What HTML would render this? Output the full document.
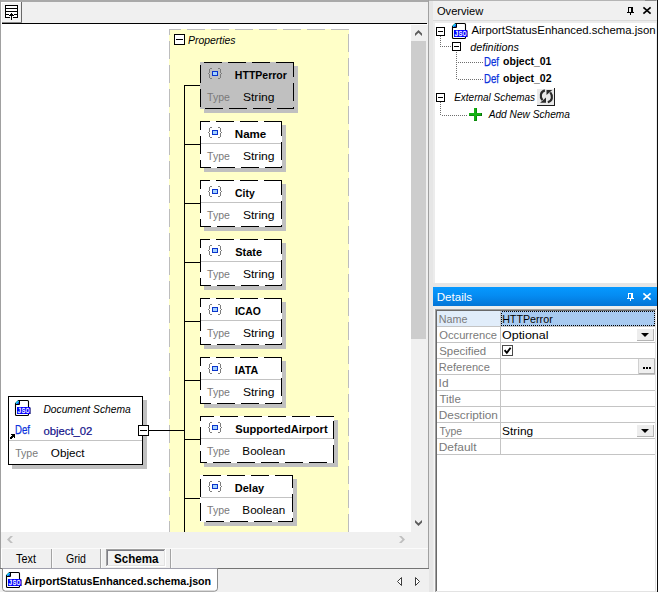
<!DOCTYPE html>
<html lang="en">
<head>
<meta charset="utf-8">
<title>AirportStatusEnhanced.schema.json - JSON Schema View</title>
<style>
html,body{margin:0;padding:0;width:658px;height:592px;overflow:hidden;background:#f0f0f0;}
svg{position:absolute;left:0;top:0;display:block;}
svg text{font-family:"Liberation Sans",sans-serif;white-space:pre;}
</style>
</head>
<body>
<svg width="658" height="592" viewBox="0 0 658 592">
<g id="shapes">
<rect x="0" y="0" width="428" height="2" fill="#a9a9a9" />
<rect x="428" y="0" width="230" height="1" fill="#b4b4b4" />
<rect x="645" y="0" width="11" height="1" fill="#8c8c8c" />
<rect x="0" y="0" width="1" height="568" fill="#a0a0a0" />
<rect x="1" y="2" width="1" height="566" fill="#fff" />
<rect x="1" y="2" width="20" height="1" fill="#fff" />
<rect x="3" y="3" width="17" height="19" fill="#f4f4f4" />
<rect x="21" y="2" width="1" height="21" fill="#696969" />
<rect x="2" y="22" width="20" height="1" fill="#8a8a8a" />
<rect x="2" y="23" width="425" height="1" fill="#000" />
<rect x="6" y="6" width="11" height="11" fill="#fff" />
<rect x="5" y="5" width="13" height="1" fill="#000" />
<rect x="5" y="8" width="13" height="1" fill="#000" />
<rect x="5" y="11" width="13" height="1" fill="#000" />
<rect x="5" y="14" width="4" height="1" fill="#000" />
<rect x="14" y="14" width="4" height="1" fill="#000" />
<rect x="5" y="17" width="5" height="1" fill="#000" />
<rect x="13" y="17" width="5" height="1" fill="#000" />
<rect x="5" y="5" width="1" height="13" fill="#000" />
<rect x="17" y="5" width="1" height="13" fill="#000" />
<rect x="11" y="13" width="1" height="7" fill="#000" />
<rect x="10" y="14" width="3" height="1" fill="#000" />
<rect x="9" y="15" width="5" height="1" fill="#000" />
<rect x="2" y="24" width="409" height="508" fill="#fff" />
<rect x="169" y="29" width="180" height="503" fill="#ffffc8" />
<g stroke="#bdbdbd" stroke-width="1" fill="none" shape-rendering="crispEdges" stroke-dasharray="18 6"><path d="M349 29.5H169"/><path d="M169.5 29V532" stroke-dashoffset="12"/><path d="M348.5 34V532"/></g>
<rect x="174" y="34" width="11" height="11" fill="#fff" />
<rect x="174" y="34" width="11" height="1" fill="#000" />
<rect x="174" y="44" width="11" height="1" fill="#000" />
<rect x="174" y="34" width="1" height="11" fill="#000" />
<rect x="184" y="34" width="1" height="11" fill="#000" />
<rect x="176" y="39" width="7" height="1" fill="#000" />
<rect x="184" y="85" width="1" height="447" fill="#000" />
<rect x="149" y="430" width="35" height="1" fill="#000" />
<rect x="204" y="66" width="94" height="47" fill="#c0c0c0" />
<rect x="200" y="62" width="94" height="47" fill="#c0c0c0" />
<path d="M294 62.5H200.5V108.5H293.5V62.5" fill="none" stroke="#000" stroke-width="1" stroke-dasharray="18 6" shape-rendering="crispEdges"/>
<rect x="185" y="85" width="15" height="1" fill="#000" />
<rect x="210" y="68" width="2" height="1" fill="#7c7c7c" />
<rect x="209" y="69" width="1" height="4" fill="#7c7c7c" />
<rect x="208" y="73" width="1" height="1" fill="#7c7c7c" />
<rect x="209" y="74" width="1" height="4" fill="#7c7c7c" />
<rect x="210" y="78" width="2" height="1" fill="#7c7c7c" />
<rect x="218" y="68" width="2" height="1" fill="#7c7c7c" />
<rect x="220" y="69" width="1" height="4" fill="#7c7c7c" />
<rect x="221" y="73" width="1" height="1" fill="#7c7c7c" />
<rect x="220" y="74" width="1" height="4" fill="#7c7c7c" />
<rect x="218" y="78" width="2" height="1" fill="#7c7c7c" />
<rect x="212" y="71" width="6" height="5" fill="#0a34cc" />
<rect x="213" y="72" width="4" height="3" fill="#a4d2ff" />
<rect x="204" y="125" width="82" height="47" fill="#c0c0c0" />
<rect x="200" y="121" width="82" height="47" fill="#fff" />
<rect x="201" y="143" width="80" height="1" fill="#c3c3c3" />
<path d="M282 121.5H200.5V167.5H281.5V121.5" fill="none" stroke="#000" stroke-width="1" stroke-dasharray="18 6" shape-rendering="crispEdges"/>
<rect x="185" y="144" width="15" height="1" fill="#000" />
<rect x="210" y="127" width="2" height="1" fill="#7c7c7c" />
<rect x="209" y="128" width="1" height="4" fill="#7c7c7c" />
<rect x="208" y="132" width="1" height="1" fill="#7c7c7c" />
<rect x="209" y="133" width="1" height="4" fill="#7c7c7c" />
<rect x="210" y="137" width="2" height="1" fill="#7c7c7c" />
<rect x="218" y="127" width="2" height="1" fill="#7c7c7c" />
<rect x="220" y="128" width="1" height="4" fill="#7c7c7c" />
<rect x="221" y="132" width="1" height="1" fill="#7c7c7c" />
<rect x="220" y="133" width="1" height="4" fill="#7c7c7c" />
<rect x="218" y="137" width="2" height="1" fill="#7c7c7c" />
<rect x="212" y="130" width="6" height="5" fill="#0a34cc" />
<rect x="213" y="131" width="4" height="3" fill="#a4d2ff" />
<rect x="204" y="184" width="82" height="47" fill="#c0c0c0" />
<rect x="200" y="180" width="82" height="47" fill="#fff" />
<rect x="201" y="202" width="80" height="1" fill="#c3c3c3" />
<path d="M282 180.5H200.5V226.5H281.5V180.5" fill="none" stroke="#000" stroke-width="1" stroke-dasharray="18 6" shape-rendering="crispEdges"/>
<rect x="185" y="203" width="15" height="1" fill="#000" />
<rect x="210" y="186" width="2" height="1" fill="#7c7c7c" />
<rect x="209" y="187" width="1" height="4" fill="#7c7c7c" />
<rect x="208" y="191" width="1" height="1" fill="#7c7c7c" />
<rect x="209" y="192" width="1" height="4" fill="#7c7c7c" />
<rect x="210" y="196" width="2" height="1" fill="#7c7c7c" />
<rect x="218" y="186" width="2" height="1" fill="#7c7c7c" />
<rect x="220" y="187" width="1" height="4" fill="#7c7c7c" />
<rect x="221" y="191" width="1" height="1" fill="#7c7c7c" />
<rect x="220" y="192" width="1" height="4" fill="#7c7c7c" />
<rect x="218" y="196" width="2" height="1" fill="#7c7c7c" />
<rect x="212" y="189" width="6" height="5" fill="#0a34cc" />
<rect x="213" y="190" width="4" height="3" fill="#a4d2ff" />
<rect x="204" y="243" width="82" height="47" fill="#c0c0c0" />
<rect x="200" y="239" width="82" height="47" fill="#fff" />
<rect x="201" y="261" width="80" height="1" fill="#c3c3c3" />
<path d="M282 239.5H200.5V285.5H281.5V239.5" fill="none" stroke="#000" stroke-width="1" stroke-dasharray="18 6" shape-rendering="crispEdges"/>
<rect x="185" y="262" width="15" height="1" fill="#000" />
<rect x="210" y="245" width="2" height="1" fill="#7c7c7c" />
<rect x="209" y="246" width="1" height="4" fill="#7c7c7c" />
<rect x="208" y="250" width="1" height="1" fill="#7c7c7c" />
<rect x="209" y="251" width="1" height="4" fill="#7c7c7c" />
<rect x="210" y="255" width="2" height="1" fill="#7c7c7c" />
<rect x="218" y="245" width="2" height="1" fill="#7c7c7c" />
<rect x="220" y="246" width="1" height="4" fill="#7c7c7c" />
<rect x="221" y="250" width="1" height="1" fill="#7c7c7c" />
<rect x="220" y="251" width="1" height="4" fill="#7c7c7c" />
<rect x="218" y="255" width="2" height="1" fill="#7c7c7c" />
<rect x="212" y="248" width="6" height="5" fill="#0a34cc" />
<rect x="213" y="249" width="4" height="3" fill="#a4d2ff" />
<rect x="204" y="302" width="82" height="47" fill="#c0c0c0" />
<rect x="200" y="298" width="82" height="47" fill="#fff" />
<rect x="201" y="320" width="80" height="1" fill="#c3c3c3" />
<path d="M282 298.5H200.5V344.5H281.5V298.5" fill="none" stroke="#000" stroke-width="1" stroke-dasharray="18 6" shape-rendering="crispEdges"/>
<rect x="185" y="321" width="15" height="1" fill="#000" />
<rect x="210" y="304" width="2" height="1" fill="#7c7c7c" />
<rect x="209" y="305" width="1" height="4" fill="#7c7c7c" />
<rect x="208" y="309" width="1" height="1" fill="#7c7c7c" />
<rect x="209" y="310" width="1" height="4" fill="#7c7c7c" />
<rect x="210" y="314" width="2" height="1" fill="#7c7c7c" />
<rect x="218" y="304" width="2" height="1" fill="#7c7c7c" />
<rect x="220" y="305" width="1" height="4" fill="#7c7c7c" />
<rect x="221" y="309" width="1" height="1" fill="#7c7c7c" />
<rect x="220" y="310" width="1" height="4" fill="#7c7c7c" />
<rect x="218" y="314" width="2" height="1" fill="#7c7c7c" />
<rect x="212" y="307" width="6" height="5" fill="#0a34cc" />
<rect x="213" y="308" width="4" height="3" fill="#a4d2ff" />
<rect x="204" y="361" width="82" height="47" fill="#c0c0c0" />
<rect x="200" y="357" width="82" height="47" fill="#fff" />
<rect x="201" y="379" width="80" height="1" fill="#c3c3c3" />
<path d="M282 357.5H200.5V403.5H281.5V357.5" fill="none" stroke="#000" stroke-width="1" stroke-dasharray="18 6" shape-rendering="crispEdges"/>
<rect x="185" y="380" width="15" height="1" fill="#000" />
<rect x="210" y="363" width="2" height="1" fill="#7c7c7c" />
<rect x="209" y="364" width="1" height="4" fill="#7c7c7c" />
<rect x="208" y="368" width="1" height="1" fill="#7c7c7c" />
<rect x="209" y="369" width="1" height="4" fill="#7c7c7c" />
<rect x="210" y="373" width="2" height="1" fill="#7c7c7c" />
<rect x="218" y="363" width="2" height="1" fill="#7c7c7c" />
<rect x="220" y="364" width="1" height="4" fill="#7c7c7c" />
<rect x="221" y="368" width="1" height="1" fill="#7c7c7c" />
<rect x="220" y="369" width="1" height="4" fill="#7c7c7c" />
<rect x="218" y="373" width="2" height="1" fill="#7c7c7c" />
<rect x="212" y="366" width="6" height="5" fill="#0a34cc" />
<rect x="213" y="367" width="4" height="3" fill="#a4d2ff" />
<rect x="204" y="420" width="134" height="47" fill="#c0c0c0" />
<rect x="200" y="416" width="134" height="47" fill="#fff" />
<rect x="201" y="438" width="132" height="1" fill="#c3c3c3" />
<path d="M334 416.5H200.5V462.5H333.5V416.5" fill="none" stroke="#000" stroke-width="1" stroke-dasharray="18 6" shape-rendering="crispEdges"/>
<rect x="185" y="439" width="15" height="1" fill="#000" />
<rect x="210" y="422" width="2" height="1" fill="#7c7c7c" />
<rect x="209" y="423" width="1" height="4" fill="#7c7c7c" />
<rect x="208" y="427" width="1" height="1" fill="#7c7c7c" />
<rect x="209" y="428" width="1" height="4" fill="#7c7c7c" />
<rect x="210" y="432" width="2" height="1" fill="#7c7c7c" />
<rect x="218" y="422" width="2" height="1" fill="#7c7c7c" />
<rect x="220" y="423" width="1" height="4" fill="#7c7c7c" />
<rect x="221" y="427" width="1" height="1" fill="#7c7c7c" />
<rect x="220" y="428" width="1" height="4" fill="#7c7c7c" />
<rect x="218" y="432" width="2" height="1" fill="#7c7c7c" />
<rect x="212" y="425" width="6" height="5" fill="#0a34cc" />
<rect x="213" y="426" width="4" height="3" fill="#a4d2ff" />
<rect x="204" y="479" width="93" height="47" fill="#c0c0c0" />
<rect x="200" y="475" width="93" height="47" fill="#fff" />
<rect x="201" y="497" width="91" height="1" fill="#c3c3c3" />
<path d="M293 475.5H200.5V521.5H292.5V475.5" fill="none" stroke="#000" stroke-width="1" stroke-dasharray="18 6" shape-rendering="crispEdges"/>
<rect x="185" y="498" width="15" height="1" fill="#000" />
<rect x="210" y="481" width="2" height="1" fill="#7c7c7c" />
<rect x="209" y="482" width="1" height="4" fill="#7c7c7c" />
<rect x="208" y="486" width="1" height="1" fill="#7c7c7c" />
<rect x="209" y="487" width="1" height="4" fill="#7c7c7c" />
<rect x="210" y="491" width="2" height="1" fill="#7c7c7c" />
<rect x="218" y="481" width="2" height="1" fill="#7c7c7c" />
<rect x="220" y="482" width="1" height="4" fill="#7c7c7c" />
<rect x="221" y="486" width="1" height="1" fill="#7c7c7c" />
<rect x="220" y="487" width="1" height="4" fill="#7c7c7c" />
<rect x="218" y="491" width="2" height="1" fill="#7c7c7c" />
<rect x="212" y="484" width="6" height="5" fill="#0a34cc" />
<rect x="213" y="485" width="4" height="3" fill="#a4d2ff" />
<rect x="12" y="400" width="135" height="69" fill="#c0c0c0" />
<rect x="8" y="396" width="135" height="69" fill="#fff" />
<rect x="8" y="396" width="135" height="1" fill="#000" />
<rect x="8" y="464" width="135" height="1" fill="#000" />
<rect x="8" y="396" width="1" height="69" fill="#000" />
<rect x="142" y="396" width="1" height="69" fill="#000" />
<rect x="9" y="440" width="133" height="1" fill="#c3c3c3" />
<rect x="138" y="425" width="11" height="11" fill="#fff" />
<rect x="138" y="425" width="11" height="1" fill="#000" />
<rect x="138" y="435" width="11" height="1" fill="#000" />
<rect x="138" y="425" width="1" height="11" fill="#000" />
<rect x="148" y="425" width="1" height="11" fill="#000" />
<rect x="140" y="430" width="7" height="1" fill="#000" />
<g transform="translate(15 400)"><path d="M3.5 0.5H12.5Q13.5 0.5 13.5 1.5V14.5Q13.5 15.5 12.5 15.5H1.5Q0.5 15.5 0.5 14.5V3.5Z" fill="#fff" stroke="#000" stroke-width="1.1"/><path d="M4 1V4H1Z" fill="#1438d8"/><path d="M1.0 3.6L3.6 1.0" stroke="#10d0ff" stroke-width="1.5" fill="none"/><path d="M4.5 0.5V4.5H0.5" stroke="#000" stroke-width="1" fill="none"/><rect x="14" y="7.5" width="1.6" height="6.5" fill="#00006e"/><rect x="2" y="7" width="13" height="7" fill="#0000ff"/><g font-size="7" fill="#fff" stroke="#fff" stroke-width="0.3" text-anchor="middle"><text x="4.45" y="13" textLength="3.3" lengthAdjust="spacingAndGlyphs">J</text><text x="8.5" y="13" textLength="3.5" lengthAdjust="spacingAndGlyphs">S</text><text x="12.5" y="13" textLength="3.6" lengthAdjust="spacingAndGlyphs">O</text></g></g>
<rect x="11" y="434" width="4" height="1" fill="#000" />
<rect x="12" y="435" width="3" height="1" fill="#000" />
<rect x="11" y="436" width="4" height="1" fill="#000" />
<rect x="10" y="437" width="3" height="1" fill="#000" />
<rect x="14" y="437" width="1" height="1" fill="#000" />
<rect x="10" y="438" width="2" height="1" fill="#000" />
<rect x="411" y="25" width="17" height="507" fill="#f0f0f0" />
<rect x="411" y="24" width="17" height="1" fill="#fff" />
<rect x="411" y="41" width="15" height="298" fill="#cdcdcd" />
<path d="M418.5 30L422 33.5V36L418.5 32.7L415 36V33.5Z" stroke="none" stroke-width="0" fill="#5c5c5c" />
<path d="M418.5 526L422 522.5V520L418.5 523.3L415 520V522.5Z" stroke="none" stroke-width="0" fill="#5c5c5c" />
<rect x="1" y="532" width="427" height="16" fill="#f0f0f0" />
<path d="M7 539.5L10.5 536H13L9.6 539.5L13 543H10.5Z" stroke="none" stroke-width="0" fill="#bfbfbf" />
<path d="M405 539.5L401.5 536H399L402.4 539.5L399 543H401.5Z" stroke="none" stroke-width="0" fill="#bfbfbf" />
<rect x="1" y="548" width="427" height="1" fill="#fbfbfb" />
<rect x="428" y="0" width="1" height="569" fill="#a0a0a0" />
<rect x="51" y="549" width="1" height="19" fill="#a3a3a3" />
<rect x="52" y="549" width="1" height="19" fill="#fafafa" />
<rect x="100" y="549" width="1" height="19" fill="#a3a3a3" />
<rect x="101" y="549" width="1" height="19" fill="#fafafa" />
<rect x="170" y="549" width="1" height="19" fill="#a3a3a3" />
<rect x="171" y="549" width="1" height="19" fill="#fafafa" />
<rect x="106" y="549" width="60" height="18" fill="#f3f3f3" />
<rect x="106" y="549" width="60" height="1" fill="#a0a0a0" />
<rect x="106" y="549" width="1" height="18" fill="#a0a0a0" />
<rect x="107" y="550" width="58" height="1" fill="#7e7e86" />
<rect x="107" y="550" width="1" height="16" fill="#7e7e86" />
<rect x="106" y="566" width="60" height="1" fill="#fff" />
<rect x="165" y="549" width="1" height="18" fill="#fff" />
<rect x="107" y="565" width="58" height="1" fill="#e3e3e3" />
<rect x="164" y="550" width="1" height="16" fill="#e3e3e3" />
<rect x="0" y="568" width="429" height="1" fill="#747474" />
<path d="M2.5 568.5V588.2Q2.5 591.2 5.5 591.2H214.5Q217.5 591.2 217.5 588.2V568.5" stroke="#8a8a8a" stroke-width="1" fill="#fff" />
<rect x="3" y="568" width="214" height="1" fill="#a2a2ae" />
<g transform="translate(6 572)"><path d="M3.5 0.5H12.5Q13.5 0.5 13.5 1.5V14.5Q13.5 15.5 12.5 15.5H1.5Q0.5 15.5 0.5 14.5V3.5Z" fill="#fff" stroke="#000" stroke-width="1.1"/><path d="M4 1V4H1Z" fill="#1438d8"/><path d="M1.0 3.6L3.6 1.0" stroke="#10d0ff" stroke-width="1.5" fill="none"/><path d="M4.5 0.5V4.5H0.5" stroke="#000" stroke-width="1" fill="none"/><rect x="14" y="7.5" width="1.6" height="6.5" fill="#00006e"/><rect x="2" y="7" width="13" height="7" fill="#0000ff"/><g font-size="7" fill="#fff" stroke="#fff" stroke-width="0.3" text-anchor="middle"><text x="4.45" y="13" textLength="3.3" lengthAdjust="spacingAndGlyphs">J</text><text x="8.5" y="13" textLength="3.5" lengthAdjust="spacingAndGlyphs">S</text><text x="12.5" y="13" textLength="3.6" lengthAdjust="spacingAndGlyphs">O</text></g></g>
<path d="M401.5 577.5V585.5L397.5 581.5Z" stroke="#3c3c3c" stroke-width="1" fill="#fff" />
<path d="M415.5 577.5V585.5L419.5 581.5Z" stroke="#3c3c3c" stroke-width="1" fill="#fff" />
<rect x="429" y="1" width="228" height="591" fill="#e6e6e6" />
<rect x="433" y="1" width="224" height="19" fill="#f0f0f0" />
<rect x="433" y="20" width="224" height="1" fill="#dadada" />
<rect x="433" y="21" width="224" height="262" fill="#ececec" />
<rect x="435" y="23" width="221" height="260" fill="#fff" />
<rect x="433" y="306" width="224" height="286" fill="#ededed" />
<rect x="657" y="0" width="1" height="592" fill="#0c0c0c" />
<g fill="#000" shape-rendering="crispEdges"><rect x="628" y="7" width="5" height="1"/><rect x="628" y="7" width="1" height="5"/><rect x="631" y="7" width="2" height="5"/><rect x="627" y="12" width="7" height="1"/><rect x="630" y="13" width="1" height="2"/></g>
<path d="M643.4 7.4L650.6 13.6M650.6 7.4L643.4 13.6" stroke="#000" stroke-width="1.7" fill="none" />
<rect x="436" y="27" width="9" height="9" fill="#fff" />
<rect x="436" y="27" width="9" height="1" fill="#000" />
<rect x="436" y="35" width="9" height="1" fill="#000" />
<rect x="436" y="27" width="1" height="9" fill="#000" />
<rect x="444" y="27" width="1" height="9" fill="#000" />
<rect x="438" y="31" width="5" height="1" fill="#000" />
<rect x="452" y="42" width="9" height="9" fill="#fff" />
<rect x="452" y="42" width="9" height="1" fill="#000" />
<rect x="452" y="50" width="9" height="1" fill="#000" />
<rect x="452" y="42" width="1" height="9" fill="#000" />
<rect x="460" y="42" width="1" height="9" fill="#000" />
<rect x="454" y="46" width="5" height="1" fill="#000" />
<rect x="436" y="93" width="9" height="9" fill="#fff" />
<rect x="436" y="93" width="9" height="1" fill="#000" />
<rect x="436" y="101" width="9" height="1" fill="#000" />
<rect x="436" y="93" width="1" height="9" fill="#000" />
<rect x="444" y="93" width="1" height="9" fill="#000" />
<rect x="438" y="97" width="5" height="1" fill="#000" />
<rect x="440" y="36" width="1" height="1" fill="#6e6e6e" />
<rect x="440" y="38" width="1" height="1" fill="#6e6e6e" />
<rect x="440" y="40" width="1" height="1" fill="#6e6e6e" />
<rect x="440" y="42" width="1" height="1" fill="#6e6e6e" />
<rect x="440" y="44" width="1" height="1" fill="#6e6e6e" />
<rect x="440" y="46" width="1" height="1" fill="#6e6e6e" />
<rect x="442" y="46" width="1" height="1" fill="#6e6e6e" />
<rect x="444" y="46" width="1" height="1" fill="#6e6e6e" />
<rect x="446" y="46" width="1" height="1" fill="#6e6e6e" />
<rect x="448" y="46" width="1" height="1" fill="#6e6e6e" />
<rect x="450" y="46" width="1" height="1" fill="#6e6e6e" />
<rect x="456" y="52" width="1" height="1" fill="#6e6e6e" />
<rect x="456" y="54" width="1" height="1" fill="#6e6e6e" />
<rect x="456" y="56" width="1" height="1" fill="#6e6e6e" />
<rect x="456" y="58" width="1" height="1" fill="#6e6e6e" />
<rect x="456" y="60" width="1" height="1" fill="#6e6e6e" />
<rect x="456" y="62" width="1" height="1" fill="#6e6e6e" />
<rect x="456" y="64" width="1" height="1" fill="#6e6e6e" />
<rect x="456" y="66" width="1" height="1" fill="#6e6e6e" />
<rect x="456" y="68" width="1" height="1" fill="#6e6e6e" />
<rect x="456" y="70" width="1" height="1" fill="#6e6e6e" />
<rect x="456" y="72" width="1" height="1" fill="#6e6e6e" />
<rect x="456" y="74" width="1" height="1" fill="#6e6e6e" />
<rect x="456" y="76" width="1" height="1" fill="#6e6e6e" />
<rect x="456" y="78" width="1" height="1" fill="#6e6e6e" />
<rect x="458" y="62" width="1" height="1" fill="#6e6e6e" />
<rect x="460" y="62" width="1" height="1" fill="#6e6e6e" />
<rect x="462" y="62" width="1" height="1" fill="#6e6e6e" />
<rect x="464" y="62" width="1" height="1" fill="#6e6e6e" />
<rect x="466" y="62" width="1" height="1" fill="#6e6e6e" />
<rect x="468" y="62" width="1" height="1" fill="#6e6e6e" />
<rect x="470" y="62" width="1" height="1" fill="#6e6e6e" />
<rect x="472" y="62" width="1" height="1" fill="#6e6e6e" />
<rect x="474" y="62" width="1" height="1" fill="#6e6e6e" />
<rect x="476" y="62" width="1" height="1" fill="#6e6e6e" />
<rect x="478" y="62" width="1" height="1" fill="#6e6e6e" />
<rect x="480" y="62" width="1" height="1" fill="#6e6e6e" />
<rect x="482" y="62" width="1" height="1" fill="#6e6e6e" />
<rect x="458" y="79" width="1" height="1" fill="#6e6e6e" />
<rect x="460" y="79" width="1" height="1" fill="#6e6e6e" />
<rect x="462" y="79" width="1" height="1" fill="#6e6e6e" />
<rect x="464" y="79" width="1" height="1" fill="#6e6e6e" />
<rect x="466" y="79" width="1" height="1" fill="#6e6e6e" />
<rect x="468" y="79" width="1" height="1" fill="#6e6e6e" />
<rect x="470" y="79" width="1" height="1" fill="#6e6e6e" />
<rect x="472" y="79" width="1" height="1" fill="#6e6e6e" />
<rect x="474" y="79" width="1" height="1" fill="#6e6e6e" />
<rect x="476" y="79" width="1" height="1" fill="#6e6e6e" />
<rect x="478" y="79" width="1" height="1" fill="#6e6e6e" />
<rect x="480" y="79" width="1" height="1" fill="#6e6e6e" />
<rect x="482" y="79" width="1" height="1" fill="#6e6e6e" />
<rect x="440" y="102" width="1" height="1" fill="#6e6e6e" />
<rect x="440" y="104" width="1" height="1" fill="#6e6e6e" />
<rect x="440" y="106" width="1" height="1" fill="#6e6e6e" />
<rect x="440" y="108" width="1" height="1" fill="#6e6e6e" />
<rect x="440" y="110" width="1" height="1" fill="#6e6e6e" />
<rect x="440" y="112" width="1" height="1" fill="#6e6e6e" />
<rect x="440" y="114" width="1" height="1" fill="#6e6e6e" />
<rect x="442" y="115" width="1" height="1" fill="#6e6e6e" />
<rect x="444" y="115" width="1" height="1" fill="#6e6e6e" />
<rect x="446" y="115" width="1" height="1" fill="#6e6e6e" />
<rect x="448" y="115" width="1" height="1" fill="#6e6e6e" />
<rect x="450" y="115" width="1" height="1" fill="#6e6e6e" />
<rect x="452" y="115" width="1" height="1" fill="#6e6e6e" />
<rect x="454" y="115" width="1" height="1" fill="#6e6e6e" />
<rect x="456" y="115" width="1" height="1" fill="#6e6e6e" />
<rect x="458" y="115" width="1" height="1" fill="#6e6e6e" />
<rect x="460" y="115" width="1" height="1" fill="#6e6e6e" />
<rect x="462" y="115" width="1" height="1" fill="#6e6e6e" />
<rect x="464" y="115" width="1" height="1" fill="#6e6e6e" />
<rect x="466" y="115" width="1" height="1" fill="#6e6e6e" />
<g transform="translate(452 23)"><path d="M3.5 0.5H12.5Q13.5 0.5 13.5 1.5V14.5Q13.5 15.5 12.5 15.5H1.5Q0.5 15.5 0.5 14.5V3.5Z" fill="#fff" stroke="#000" stroke-width="1.1"/><path d="M4 1V4H1Z" fill="#1438d8"/><path d="M1.0 3.6L3.6 1.0" stroke="#10d0ff" stroke-width="1.5" fill="none"/><path d="M4.5 0.5V4.5H0.5" stroke="#000" stroke-width="1" fill="none"/><rect x="14" y="7.5" width="1.6" height="6.5" fill="#00006e"/><rect x="2" y="7" width="13" height="7" fill="#0000ff"/><g font-size="7" fill="#fff" stroke="#fff" stroke-width="0.3" text-anchor="middle"><text x="4.45" y="13" textLength="3.3" lengthAdjust="spacingAndGlyphs">J</text><text x="8.5" y="13" textLength="3.5" lengthAdjust="spacingAndGlyphs">S</text><text x="12.5" y="13" textLength="3.6" lengthAdjust="spacingAndGlyphs">O</text></g></g>
<rect x="537" y="89" width="17" height="16" fill="#e9e9e9" />
<rect x="554" y="88" width="1" height="18" fill="#1c1c1c" />
<rect x="537" y="105" width="18" height="1" fill="#1c1c1c" />
<g stroke="#2a2a2a" stroke-width="2.15" fill="none"><path d="M544.9 90.4C540.4 91.6 539.6 96.6 542.4 100.2"/><path d="M547.8 102.2C552.4 101.0 553.2 96.0 550.3 92.4"/></g>
<path d="M540.1 102.7H546.0V97.5Z" fill="#2a2a2a"/><path d="M552.3 90.0H546.5V95.1Z" fill="#2a2a2a"/>
<rect x="474" y="108" width="3" height="13" fill="#14b014" />
<rect x="469" y="113" width="13" height="3" fill="#14b014" />
<rect x="476" y="108" width="1" height="5" fill="#0c8c0c" />
<rect x="476" y="116" width="1" height="5" fill="#0c8c0c" />
<rect x="469" y="115" width="5" height="1" fill="#0c8c0c" />
<rect x="477" y="115" width="5" height="1" fill="#0c8c0c" />
<rect x="481" y="113" width="1" height="3" fill="#0a6e0a" />
<rect x="474" y="120" width="3" height="1" fill="#0c8c0c" />
<defs><linearGradient id="hdr" x1="0" y1="0" x2="0" y2="1"><stop offset="0" stop-color="#0699ff"/><stop offset="0.45" stop-color="#058cf2"/><stop offset="1" stop-color="#0374d6"/></linearGradient></defs>
<rect x="433" y="287" width="224" height="19" fill="url(#hdr)" />
<g fill="#fff" shape-rendering="crispEdges"><rect x="628" y="293" width="5" height="1"/><rect x="628" y="293" width="1" height="5"/><rect x="631" y="293" width="2" height="5"/><rect x="627" y="298" width="7" height="1"/><rect x="630" y="299" width="1" height="2"/></g>
<path d="M643.4 293.4L650.6 299.6M650.6 293.4L643.4 299.6" stroke="#fff" stroke-width="1.6" fill="none" />
<rect x="434" y="309" width="1" height="283" fill="#f6f6f6" />
<rect x="435" y="309" width="221" height="1" fill="#a0a0a0" />
<rect x="435" y="309" width="1" height="283" fill="#a0a0a0" />
<rect x="436" y="310" width="220" height="1" fill="#696969" />
<rect x="436" y="310" width="1" height="282" fill="#696969" />
<rect x="437" y="311" width="218" height="280" fill="#fff" />
<rect x="655" y="310" width="1" height="282" fill="#e3e3e3" />
<rect x="656" y="309" width="1" height="283" fill="#fff" />
<rect x="436" y="591" width="221" height="1" fill="#e3e3e3" />
<rect x="437" y="311" width="63" height="15" fill="#e1edfa" />
<rect x="501" y="311" width="154" height="15" fill="#a8caf0" />
<path d="M501.5 311.5H654.5V325.5H501.5Z" fill="none" stroke="#000" stroke-width="1" stroke-dasharray="1 1" shape-rendering="crispEdges"/>
<rect x="437" y="326" width="218" height="1" fill="#c4c4c4" />
<rect x="437" y="342" width="218" height="1" fill="#c4c4c4" />
<rect x="437" y="358" width="218" height="1" fill="#c4c4c4" />
<rect x="437" y="374" width="218" height="1" fill="#c4c4c4" />
<rect x="437" y="390" width="218" height="1" fill="#c4c4c4" />
<rect x="437" y="406" width="218" height="1" fill="#c4c4c4" />
<rect x="437" y="422" width="218" height="1" fill="#c4c4c4" />
<rect x="437" y="438" width="218" height="1" fill="#c4c4c4" />
<rect x="437" y="454" width="218" height="1" fill="#c4c4c4" />
<rect x="500" y="311" width="1" height="144" fill="#c4c4c4" />
<rect x="637" y="329" width="17" height="11" fill="#ededed" />
<rect x="637" y="340" width="17" height="1" fill="#b4b4b4" />
<rect x="653" y="329" width="1" height="11" fill="#b4b4b4" />
<path d="M641 333H649L645 337Z" fill="#000"/>
<rect x="637" y="425" width="17" height="11" fill="#ededed" />
<rect x="637" y="436" width="17" height="1" fill="#b4b4b4" />
<rect x="653" y="425" width="1" height="11" fill="#b4b4b4" />
<path d="M641 429H649L645 433Z" fill="#000"/>
<rect x="639" y="359" width="16" height="15" fill="#efefef" />
<rect x="638" y="359" width="1" height="15" fill="#d0d0d0" />
<rect x="654" y="359" width="1" height="15" fill="#b0b0b0" />
<rect x="639" y="373" width="16" height="1" fill="#b0b0b0" />
<rect x="643" y="367" width="2" height="2" fill="#000" />
<rect x="646" y="367" width="2" height="2" fill="#000" />
<rect x="649" y="367" width="2" height="2" fill="#000" />
<rect x="502" y="345" width="11" height="11" fill="#fff" />
<rect x="502" y="345" width="11" height="1" fill="#4a4a4a" />
<rect x="502" y="355" width="11" height="1" fill="#4a4a4a" />
<rect x="502" y="345" width="1" height="11" fill="#4a4a4a" />
<rect x="512" y="345" width="1" height="11" fill="#4a4a4a" />
<path d="M504.6 350.2L506.8 352.8L510.6 347.8" stroke="#000" stroke-width="1.9" fill="none" />
</g>
<g id="labels" font-size="11.2">
<text x="187.99" y="44.00" textLength="47.62" lengthAdjust="spacingAndGlyphs" font-size="11.2" font-style="italic">Properties</text>
<text x="234.87" y="79.00" textLength="52.03" lengthAdjust="spacingAndGlyphs" font-size="11.2" font-weight="bold">HTTPerror</text>
<text x="207.09" y="101.00" textLength="22.79" lengthAdjust="spacingAndGlyphs" font-size="11.2" fill="#7a7a7a">Type</text>
<text x="242.92" y="101.00" textLength="31.67" lengthAdjust="spacingAndGlyphs" font-size="11.2">String</text>
<text x="234.81" y="138.00" textLength="31.50" lengthAdjust="spacingAndGlyphs" font-size="11.2" font-weight="bold">Name</text>
<text x="207.09" y="160.00" textLength="22.79" lengthAdjust="spacingAndGlyphs" font-size="11.2" fill="#7a7a7a">Type</text>
<text x="242.92" y="160.00" textLength="31.67" lengthAdjust="spacingAndGlyphs" font-size="11.2">String</text>
<text x="235.09" y="197.00" textLength="19.57" lengthAdjust="spacingAndGlyphs" font-size="11.2" font-weight="bold">City</text>
<text x="207.09" y="219.00" textLength="22.79" lengthAdjust="spacingAndGlyphs" font-size="11.2" fill="#7a7a7a">Type</text>
<text x="242.92" y="219.00" textLength="31.67" lengthAdjust="spacingAndGlyphs" font-size="11.2">String</text>
<text x="235.28" y="256.00" textLength="26.70" lengthAdjust="spacingAndGlyphs" font-size="11.2" font-weight="bold">State</text>
<text x="207.09" y="278.00" textLength="22.79" lengthAdjust="spacingAndGlyphs" font-size="11.2" fill="#7a7a7a">Type</text>
<text x="242.92" y="278.00" textLength="31.67" lengthAdjust="spacingAndGlyphs" font-size="11.2">String</text>
<text x="234.88" y="315.00" textLength="25.91" lengthAdjust="spacingAndGlyphs" font-size="11.2" font-weight="bold">ICAO</text>
<text x="207.09" y="337.00" textLength="22.79" lengthAdjust="spacingAndGlyphs" font-size="11.2" fill="#7a7a7a">Type</text>
<text x="242.92" y="337.00" textLength="31.67" lengthAdjust="spacingAndGlyphs" font-size="11.2">String</text>
<text x="234.86" y="374.00" textLength="23.38" lengthAdjust="spacingAndGlyphs" font-size="11.2" font-weight="bold">IATA</text>
<text x="207.09" y="396.00" textLength="22.79" lengthAdjust="spacingAndGlyphs" font-size="11.2" fill="#7a7a7a">Type</text>
<text x="242.92" y="396.00" textLength="31.67" lengthAdjust="spacingAndGlyphs" font-size="11.2">String</text>
<text x="235.28" y="433.00" textLength="92.36" lengthAdjust="spacingAndGlyphs" font-size="11.2" font-weight="bold">SupportedAirport</text>
<text x="207.09" y="455.00" textLength="22.79" lengthAdjust="spacingAndGlyphs" font-size="11.2" fill="#7a7a7a">Type</text>
<text x="242.37" y="455.00" textLength="42.79" lengthAdjust="spacingAndGlyphs" font-size="11.2">Boolean</text>
<text x="234.84" y="492.00" textLength="29.32" lengthAdjust="spacingAndGlyphs" font-size="11.2" font-weight="bold">Delay</text>
<text x="207.09" y="514.00" textLength="22.79" lengthAdjust="spacingAndGlyphs" font-size="11.2" fill="#7a7a7a">Type</text>
<text x="242.37" y="514.00" textLength="42.79" lengthAdjust="spacingAndGlyphs" font-size="11.2">Boolean</text>
<text x="43.39" y="413.00" textLength="87.38" lengthAdjust="spacingAndGlyphs" font-size="11.2" font-style="italic">Document Schema</text>
<text x="15.03" y="434.00" textLength="14.95" lengthAdjust="spacingAndGlyphs" font-size="12.5" fill="#0a32dc" stroke="#0a32dc" stroke-width="0.25">Def</text>
<text x="43.45" y="435.00" textLength="48.97" lengthAdjust="spacingAndGlyphs" font-size="11.2" fill="#12128a" stroke="#12128a" stroke-width="0.2">object_02</text>
<text x="15.19" y="457.00" textLength="22.89" lengthAdjust="spacingAndGlyphs" font-size="11.2" fill="#7a7a7a">Type</text>
<text x="50.83" y="457.00" textLength="33.74" lengthAdjust="spacingAndGlyphs" font-size="11.2">Object</text>
<text x="16.08" y="563.00" textLength="19.89" lengthAdjust="spacingAndGlyphs" font-size="12.5">Text</text>
<text x="65.97" y="563.00" textLength="19.92" lengthAdjust="spacingAndGlyphs" font-size="12.5">Grid</text>
<text x="113.97" y="563.00" textLength="44.57" lengthAdjust="spacingAndGlyphs" font-size="12.5" font-weight="bold">Schema</text>
<text x="24.29" y="585.00" textLength="186.86" lengthAdjust="spacingAndGlyphs" font-size="11.2" font-weight="bold">AirportStatusEnhanced.schema.json</text>
<text x="436.96" y="15.00" textLength="46.36" lengthAdjust="spacingAndGlyphs" font-size="11.2">Overview</text>
<text x="471.50" y="34.00" textLength="184.14" lengthAdjust="spacingAndGlyphs" font-size="11.2">AirportStatusEnhanced.schema.json</text>
<text x="470.18" y="51.00" textLength="48.74" lengthAdjust="spacingAndGlyphs" font-size="11.2" font-style="italic">definitions</text>
<text x="484.03" y="66.00" textLength="14.95" lengthAdjust="spacingAndGlyphs" font-size="12.5" fill="#0a32dc" stroke="#0a32dc" stroke-width="0.25">Def</text>
<text x="503.09" y="65.00" textLength="48.39" lengthAdjust="spacingAndGlyphs" font-size="11.2" font-weight="bold">object_01</text>
<text x="484.03" y="83.00" textLength="14.95" lengthAdjust="spacingAndGlyphs" font-size="12.5" fill="#0a32dc" stroke="#0a32dc" stroke-width="0.25">Def</text>
<text x="503.08" y="82.00" textLength="48.50" lengthAdjust="spacingAndGlyphs" font-size="11.2" font-weight="bold">object_02</text>
<text x="454.20" y="101.00" textLength="80.90" lengthAdjust="spacingAndGlyphs" font-size="11.2" font-style="italic">External Schemas</text>
<text x="488.71" y="118.00" textLength="81.26" lengthAdjust="spacingAndGlyphs" font-size="11.2" font-style="italic">Add New Schema</text>
<text x="436.67" y="301.00" textLength="35.48" lengthAdjust="spacingAndGlyphs" font-size="11.2" fill="#fff">Details</text>
<text x="438.84" y="323.00" textLength="28.65" lengthAdjust="spacingAndGlyphs" font-size="11.2" fill="#7a7a7a">Name</text>
<text x="439.25" y="339.00" textLength="57.85" lengthAdjust="spacingAndGlyphs" font-size="11.2" fill="#7a7a7a">Occurrence</text>
<text x="439.24" y="355.00" textLength="46.90" lengthAdjust="spacingAndGlyphs" font-size="11.2" fill="#7a7a7a">Specified</text>
<text x="438.82" y="371.00" textLength="50.98" lengthAdjust="spacingAndGlyphs" font-size="11.2" fill="#7a7a7a">Reference</text>
<text x="438.63" y="387.00" textLength="9.94" lengthAdjust="spacingAndGlyphs" font-size="11.2" fill="#7a7a7a">Id</text>
<text x="439.47" y="403.00" textLength="21.35" lengthAdjust="spacingAndGlyphs" font-size="11.2" fill="#7a7a7a">Title</text>
<text x="438.75" y="419.00" textLength="59.21" lengthAdjust="spacingAndGlyphs" font-size="11.2" fill="#7a7a7a">Description</text>
<text x="439.49" y="435.00" textLength="22.69" lengthAdjust="spacingAndGlyphs" font-size="11.2" fill="#7a7a7a">Type</text>
<text x="438.74" y="451.00" textLength="37.83" lengthAdjust="spacingAndGlyphs" font-size="11.2" fill="#7a7a7a">Default</text>
<text x="502.14" y="323.00" textLength="50.60" lengthAdjust="spacingAndGlyphs" font-size="11.2">HTTPerror</text>
<text x="502.00" y="339.00" textLength="46.47" lengthAdjust="spacingAndGlyphs" font-size="11.2">Optional</text>
<text x="502.12" y="435.00" textLength="31.04" lengthAdjust="spacingAndGlyphs" font-size="11.2">String</text>
</g>
</svg>
</body>
</html>
